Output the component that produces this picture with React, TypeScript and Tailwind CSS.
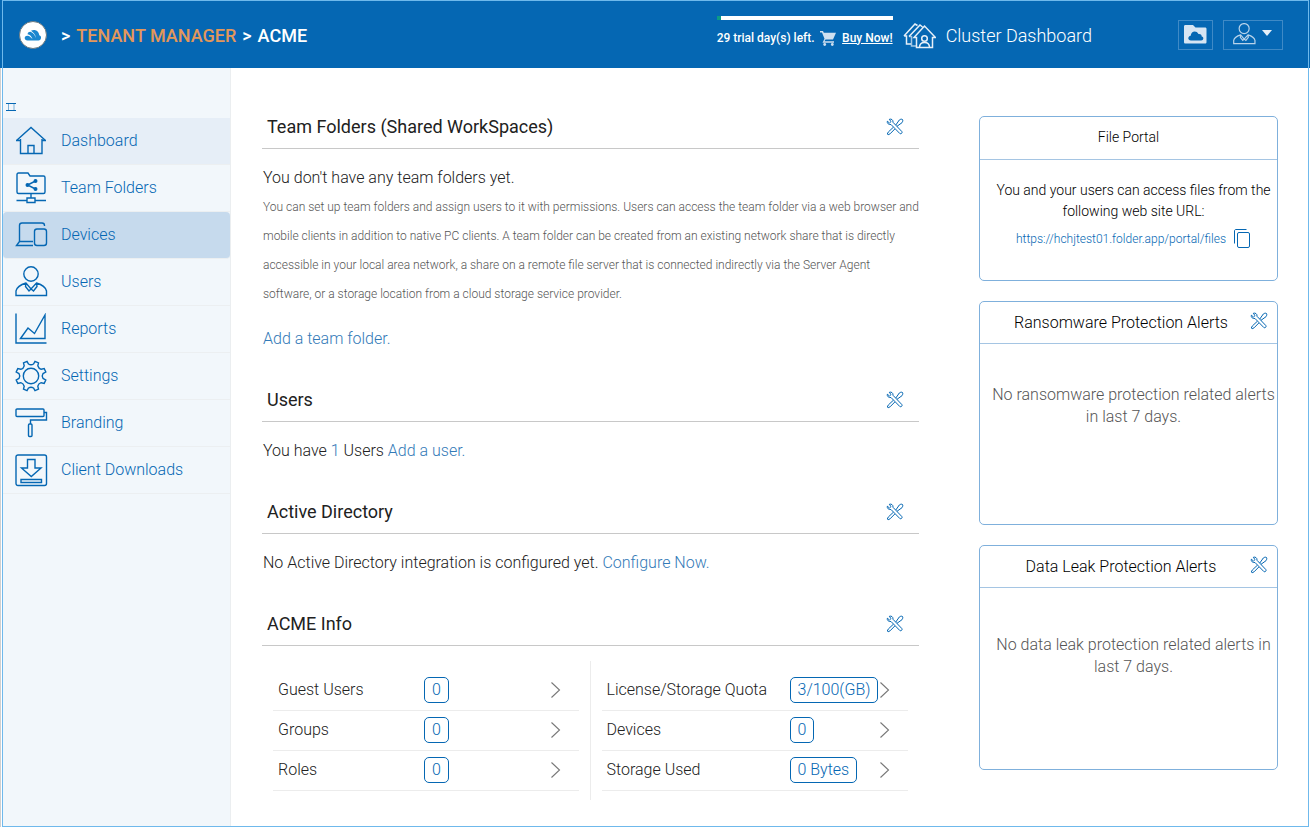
import React from 'react';

const HomeIcon = () => (
    <>
        <path d="M1.5 15.5 16 2.5l14.500 13M5.500 14v14.500h21.500V14M13 28.500v-8h6v8M1 15.500h4.500M27 15.500h4" />
    </>
);

const TeamFolderIcon = () => (
    <>
        <path d="M3.500 21.500c-1 0-1.500-.5-1.500-1.500V2.500C2 1.500 2.500 1 3.500 1H13l2 3h13.500c1 0 1.500.500 1.500 1.500V20c0 1-.500 1.500-1.500 1.500z" />
        <path d="M20.500 9 12.500 13l8 4M16 21.500V26M12 26h8v4.500h-8zM1.500 28.500H12M20 28.500h11" />
        <circle cx="12.500" cy="13" r="1.300" fill="currentColor" />
        <circle cx="20.500" cy="9" r="1.300" fill="currentColor" />
        <circle cx="20.500" cy="17" r="1.300" fill="currentColor" />
    </>
);

const DevicesIcon = () => (
    <>
        <path d="M4.500 22.500V6.500c0-1.500 1-2.500 2.500-2.500h20c1.500 0 2.500 1 2.500 2.500v.5M4.500 22.500 1.500 26.500h16.500M4.500 22.500h13.500" />
        <rect x="19.500" y="10" width="12" height="16.500" rx="2.500" />
    </>
);

const UserIcon = () => (
    <>
        <circle cx="16" cy="8" r="7.200" />
        <path d="M11 17c-5 1.500-9 3.500-10 8v4.500h30.500V25c-1-4.500-5-6.500-10-8L16 23zM11 17l-.500 3.500L14 25l2-2 2.500 2 3.500-4.500-.500-3.500" />
    </>
);

const ReportsIcon = () => (
    <>
        <path d="M1 .5V30h30.500" />
        <path d="M5.500 25.500 13 15l6.500 5.500L30 2v23.500z" />
    </>
);

const SettingsIcon = () => (
    <>
        <circle cx="16" cy="16" r="7.700" />
        <path d="M12 1.300 13.500 4c1.500 1 3.500 1 5 0L20 1.300l3.500 1.500-.7 3c.5 1.800 1.600 3 3.400 3.500l3-.7L30.800 12 28 13.600c-1 1.500-1 3.300 0 4.800l2.800 1.600-1.600 3.400-3-.7c-1.800.5-3 1.700-3.400 3.500l.7 3-3.500 1.500-1.500-2.700c-1.500-1-3.500-1-5 0L12 30.700l-3.500-1.500.7-3c-.5-1.800-1.600-3-3.400-3.500l-3 .7L1.200 20 4 18.400c1-1.500 1-3.300 0-4.800L1.200 12l1.600-3.400 3 .7c1.800-.5 3-1.700 3.400-3.500l-.7-3z" />
    </>
);

const BrandingIcon = () => (
    <>
        <rect x="1" y="2" width="28" height="7.500" rx="1" />
        <path d="M29 5.500h2.500v7.500H15.500v4" />
        <rect x="13.500" y="17" width="3.500" height="12.500" rx="1" />
    </>
);

const DownloadIcon = () => (
    <>
        <rect x="1" y="1" width="30.500" height="30.500" rx="2" />
        <path d="M12.500 5.500h7.500v8.500h6L16.300 22.500 6.500 14h6zM6 25.500h20.500v3H6z" />
    </>
);

const navItems = [
    { label: 'Dashboard', icon: <HomeIcon />, className: 'bg-[#e6eef7]' },
    { label: 'Team Folders', icon: <TeamFolderIcon />, className: '' },
    { label: 'Devices', icon: <DevicesIcon />, className: 'bg-[#c6daed] rounded' },
    { label: 'Users', icon: <UserIcon />, className: '' },
    { label: 'Reports', icon: <ReportsIcon />, className: '' },
    { label: 'Settings', icon: <SettingsIcon />, className: '' },
    { label: 'Branding', icon: <BrandingIcon />, className: '' },
    { label: 'Client Downloads', icon: <DownloadIcon />, className: '' },
];

const userStats = [
    { label: 'Guest Users', value: '0' },
    { label: 'Groups', value: '0' },
    { label: 'Roles', value: '0' },
];

const storageStats = [
    { label: 'License/Storage Quota', value: '3/100(GB)' },
    { label: 'Devices', value: '0' },
    { label: 'Storage Used', value: '0 Bytes' },
];

const ToolsButton = ({ label }: { label: string }) => (
    <button type="button" aria-label={label} className="shrink-0 cursor-pointer text-[#0567b3]">
        <svg width="18" height="18" viewBox="0 0 18 18" fill="none" stroke="currentColor">
            <path d="M1.300 3.200 3.500 5 5 3.600 3.300 1.300c2-.7 4 .5 3.700 3L15.800 13.500c1 1.200-.800 3-2 2L5 6.500C2.800 7 .800 5.300 1.300 3.200z" />
            <path d="M9.800 7 13.300 2c1.200-1 2.700-1 3.200-.5s.400 2-.5 3.200L11 8.300M7.300 9.300 2.300 14l-1 2 .8.800 2-1L8.800 11" />
        </svg>
    </button>
);

const SectionTitle = ({ title }: { title: string }) => (
    <div className="flex h-11 items-center justify-between border-b border-[#c8c8c8] pl-[5px] pr-[15px]">
        <h2 className="text-lg font-normal">{title}</h2>
        <ToolsButton label={`Manage ${title}`} />
    </div>
);

const StatRow = ({ label, value, labelClass }: { label: string; value: string; labelClass: string }) => (
    <li className="border-b border-[#ececec]">
        <a href="#" className="flex h-[39px] items-center pb-px pl-[5px] pr-[18px]">
            <span className={`shrink-0 ${labelClass}`}>{label}</span>
            <span className="shrink-0 rounded-[5px] border border-[#0567b3] px-[7px] leading-6 text-[#0567b3]">{value}</span>
            <svg className="ml-auto shrink-0" width="11" height="18" viewBox="0 0 11 18" fill="none" stroke="#777" strokeWidth="1.100">
                <path d="M1.500 1.500 9.500 9l-8 7.500" />
            </svg>
        </a>
    </li>
);

const AlertCard = ({ title, message, messageClass }: { title: string; message: string; messageClass: string }) => (
    <section className="rounded-[5px] border border-[#7fb0dc]">
        <div className="flex h-[42px] items-center border-b border-[#a5c5e3] pr-[9px]">
            <h3 className="flex-1 pl-3 text-center">{title}</h3>
            <div className="flex pb-1">
                <ToolsButton label={`${title} settings`} />
            </div>
        </div>
        <p className={`pl-[10px] text-center leading-[22px] text-[#555] ${messageClass}`}>{message}</p>
    </section>
);

const App = () => {
    return (
        <div className="flex min-h-screen flex-col bg-white font-['Roboto',sans-serif] text-base font-light text-[#212121]">
            <div className="bg-[#0567b3] pl-0.5 pr-px">
                <header className="flex h-[68px] items-center border-x border-t border-[#6fb9ec] pl-4 pr-[25px] text-white">
                    <svg className="shrink-0" width="28" height="28" viewBox="0 0 28 28">
                        <circle cx="14" cy="14" r="13.500" fill="#fff" stroke="#6d7a80" />
                        <path d="M8.500 19.500c-3.500 0-3.800-4.500-.3-4.700C10.500 14.500 12 17 13.500 18 12.500 15.500 11 13.500 8.500 13.200c.5-2 2-2.700 3.500-2.200 2.500.8 3.800 3.500 5 6C16.500 13.500 14 11 12 9.700c4-2 8 .3 8.300 4.600 2.700.7 2.200 5.200-.8 5.200z" fill="#1b87cf" />
                    </svg>
                    <nav aria-label="Breadcrumb" className="ml-3.5 flex gap-1.5 pt-0.5 text-lg font-medium">
                        <span>&gt;</span>
                        <a href="#" className="text-[#e3975a]">TENANT MANAGER</a>
                        <span>&gt;</span>
                        <span>ACME</span>
                    </nav>

                    <div className="ml-auto flex items-center">
                        <div className="w-44 pt-0.5 text-xs font-medium">
                            <div className="h-1 bg-white">
                                <div className="h-1 w-1 bg-[#0c9b86]"></div>
                            </div>
                            <div className="mt-2 flex items-center justify-between pb-2 leading-5">
                                <span>29 trial day(s) left.</span>
                                <svg width="16" height="16" viewBox="0 0 16 16" fill="#cfe0f0">
                                    <path d="M0 1h3l.8 1.700H16L13 9.500H5.500l-1 1.700h9.500v1.500H2.500L4.500 8.800 2 2.500H0z" />
                                    <circle cx="4.700" cy="14.500" r="1.400" />
                                    <circle cx="12.300" cy="14.500" r="1.400" />
                                </svg>
                                <a href="#" className="underline">Buy Now!</a>
                            </div>
                        </div>
                        <a href="#" className="ml-2.5 flex items-center gap-2.5 pt-[3px] text-lg font-light">
                            <svg width="33" height="26" viewBox="0 0 33 26" fill="none" stroke="#e6eff8" strokeWidth="1.500">
                                <path d="M11 14.500 21.500 3 32.500 14.500h-3V24.500H13.500v-10zM6 13.500 17 2l2.500 2M1 13 12 1l2.500 1.500M1 13h2.500v8H8" />
                                <path d="M6 13.500h2.500v9.500h5" strokeOpacity="0.700" />
                                <circle cx="21.500" cy="15.500" r="2.800" />
                                <path d="M16.500 24.500c0-3.500 2-5 5-5s5 1.500 5 5" />
                            </svg>
                            Cluster Dashboard
                        </a>
                        <button type="button" aria-label="Files" className="ml-[86px] flex h-[30px] w-[35px] items-center justify-center border border-[#3f8ac6]">
                            <svg width="23" height="19" viewBox="0 0 23 19">
                                <path d="M1.500 0h7.500l2.500 2.500H21c1 0 1.500.5 1.500 1.500v13c0 1-.5 1.500-1.500 1.500H1.500C.5 18.500 0 18 0 17V1.500C0 .5.500 0 1.500 0z" fill="#d6e5f3" />
                                <path d="M7 15.500c-3.500 0-3.500-4.500-.3-4.800C7 6 12.500 5 14.500 9c2.500-.2 3.200 1 3.200 2.500 2.500.5 2 4-.5 4z" fill="#0567b3" />
                            </svg>
                        </button>
                        <button type="button" aria-label="Account" className="ml-2.5 flex h-[30px] w-[60px] items-center gap-1.5 border border-[#3f8ac6] pl-[9px]">
                            <svg width="23" height="23" viewBox="0 0 33 33" fill="none" stroke="#b9d3ea" strokeWidth="1.700">
                                <UserIcon />
                            </svg>
                            <svg className="mb-1" width="10" height="6" viewBox="0 0 10 6" fill="#e6eff8">
                                <path d="M0 0h10L5 6z" />
                            </svg>
                        </button>
                    </div>
                </header>
            </div>

            <div className="flex flex-1 border-l border-[#d0d0d0] pl-px pr-px">
                <div className="flex flex-1 border-x border-b border-[#6fb9ec]">
                    <aside className="w-[228px] shrink-0 border-r border-[#ebeef0] bg-[#f2f7fb] text-[#0567b3]">
                        <div className="flex h-[50px] items-end pb-[7px] pl-[3px]">
                            <button type="button" aria-label="Collapse menu">
                                <svg width="10" height="8" viewBox="0 0 10 8" fill="none" stroke="currentColor">
                                    <path d="M0 .5h10M0 7.500h10" />
                                    <path d="M2.500 1v6M8 1v6" strokeOpacity="0.500" />
                                </svg>
                            </button>
                        </div>
                        <nav>
                            {navItems.map((item) => (
                                <a key={item.label} href="#" className={`flex h-[47px] items-center gap-[13px] border-b border-[#eceff1] pl-3 ${item.className}`}>
                                    <svg width="33" height="33" viewBox="0 0 33 33" fill="none" stroke="currentColor" strokeWidth="1.400">
                                        {item.icon}
                                    </svg>
                                    {item.label}
                                </a>
                            ))}
                        </nav>
                    </aside>

                    <div className="flex flex-1 items-start gap-[60px] pl-[31px] pr-[30px]">
                        <main className="flex-1 pt-[37px]">
                            <section className="pb-[25px]">
                                <SectionTitle title="Team Folders (Shared WorkSpaces)" />
                                <div className="pl-px pt-[14px] leading-[29px]">
                                    <p>You don't have any team folders yet.</p>
                                    <p className="pt-px text-xs leading-[29px] text-[#555]">
                                        You can set up team folders and assign users to it with permissions. Users can access the team folder via a web browser and mobile clients in addition to native PC clients. A team folder can be created from an existing network share that is directly accessible in your local area network, a share on a remote file server that is connected indirectly via the Server Agent software, or a storage location from a cloud storage service provider.
                                    </p>
                                    <p className="pt-[15px]"><a href="#" className="text-[#337ab7]">Add a team folder.</a></p>
                                </div>
                            </section>

                            <section className="pb-[25px]">
                                <SectionTitle title="Users" />
                                <p className="pl-px pt-[14px] leading-[29px]">
                                    You have <span className="text-[#337ab7]">1</span> Users <a href="#" className="text-[#337ab7]">Add a user.</a>
                                </p>
                            </section>

                            <section className="pb-[25px]">
                                <SectionTitle title="Active Directory" />
                                <p className="pl-px pt-[14px] leading-[29px]">
                                    No Active Directory integration is configured yet. <a href="#" className="text-[#337ab7]">Configure Now.</a>
                                </p>
                            </section>

                            <section className="pb-[25px]">
                                <SectionTitle title="ACME Info" />
                                <div className="mt-[15px] grid grid-cols-2">
                                    <ul className="border-r border-[#ececec] px-[11px] pb-[9px] pt-2.5">
                                        {userStats.map((stat) => (
                                            <StatRow key={stat.label} {...stat} labelClass="w-[146px]" />
                                        ))}
                                    </ul>
                                    <ul className="px-[11px] pb-[9px] pt-2.5">
                                        {storageStats.map((stat) => (
                                            <StatRow key={stat.label} {...stat} labelClass="w-[183px]" />
                                        ))}
                                    </ul>
                                </div>
                            </section>
                        </main>

                        <aside className="flex w-[299px] shrink-0 flex-col gap-5 pt-12 text-black">
                            <section className="rounded-[5px] border border-[#7fb0dc] pb-8">
                                <h3 className="border-b border-[#a5c5e3] pb-0.5 text-center text-sm leading-10">File Portal</h3>
                                <p className="pl-[10px] pt-5 text-center text-sm leading-[21px]">
                                    You and your users can access files from the following web site URL:
                                </p>
                                <div className="flex items-center justify-center gap-2 pl-[10px] pt-[7px]">
                                    <a href="#" className="text-xs text-[#0567b3]">https://hchjtest01.folder.app/portal/files</a>
                                    <button type="button" aria-label="Copy link" className="text-[#0567b3]">
                                        <svg width="17" height="19" viewBox="0 0 17 19" fill="none" stroke="currentColor">
                                            <path d="M.5 14.500V2C.500 1 1 .500 2 .500h10.500" />
                                            <rect x="3.500" y="3.500" width="12" height="15" rx="1.500" />
                                        </svg>
                                    </button>
                                </div>
                            </section>
                            <AlertCard title="Ransomware Protection Alerts" message="No ransomware protection related alerts in last 7 days." messageClass="pb-24 pt-10" />
                            <AlertCard title="Data Leak Protection Alerts" message="No data leak protection related alerts in last 7 days." messageClass="pb-[91px] pt-[46px]" />
                        </aside>
                    </div>
                </div>
            </div>
        </div>
    );
};

export default App;
